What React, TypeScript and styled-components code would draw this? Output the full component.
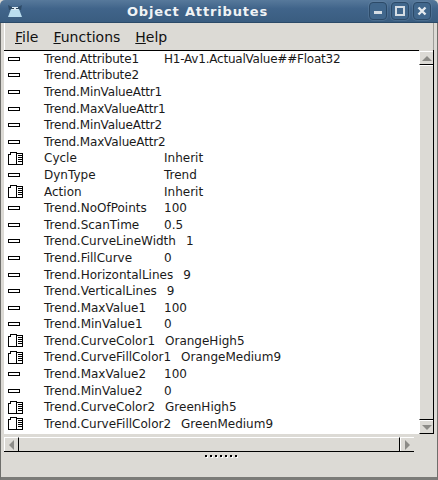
import React from 'react'
import styled, { createGlobalStyle } from 'styled-components'

type Attr = { name: string; value?: string; kind?: 'map' }

const attributes: Attr[] = [
  { name: 'Trend.Attribute1', value: 'H1-Av1.ActualValue##Float32' },
  { name: 'Trend.Attribute2' },
  { name: 'Trend.MinValueAttr1' },
  { name: 'Trend.MaxValueAttr1' },
  { name: 'Trend.MinValueAttr2' },
  { name: 'Trend.MaxValueAttr2' },
  { name: 'Cycle', value: 'Inherit', kind: 'map' },
  { name: 'DynType', value: 'Trend' },
  { name: 'Action', value: 'Inherit', kind: 'map' },
  { name: 'Trend.NoOfPoints', value: '100' },
  { name: 'Trend.ScanTime', value: '0.5' },
  { name: 'Trend.CurveLineWidth', value: '1' },
  { name: 'Trend.FillCurve', value: '0' },
  { name: 'Trend.HorizontalLines', value: '9' },
  { name: 'Trend.VerticalLines', value: '9' },
  { name: 'Trend.MaxValue1', value: '100' },
  { name: 'Trend.MinValue1', value: '0' },
  { name: 'Trend.CurveColor1', value: 'OrangeHigh5', kind: 'map' },
  { name: 'Trend.CurveFillColor1', value: 'OrangeMedium9', kind: 'map' },
  { name: 'Trend.MaxValue2', value: '100' },
  { name: 'Trend.MinValue2', value: '0' },
  { name: 'Trend.CurveColor2', value: 'GreenHigh5', kind: 'map' },
  { name: 'Trend.CurveFillColor2', value: 'GreenMedium9', kind: 'map' },
]

function AttrIcon({ kind }: { kind?: 'map' }) {
  if (kind === 'map') {
    return (
      <svg width="15" height="13" viewBox="0 0 15 13" shapeRendering="crispEdges">
        <path d="M0.5 2.5H2.5V0.5H8.5V12.5H0.5Z" fill="#fff" stroke="#000" />
        <path d="M8.5 1.5H14.5V12.5H8.5Z" fill="#fff" stroke="#000" />
        <path d="M10 3.5H14M10 5.5H14M10 7.5H14M10 9.5H14" stroke="#000" />
      </svg>
    )
  }
  return (
    <svg width="12" height="4" viewBox="0 0 12 4" shapeRendering="crispEdges">
      <rect x="0.5" y="0.5" width="11" height="3" fill="#fff" stroke="#000" />
    </svg>
  )
}

function AppIcon() {
  return (
    <svg width="16" height="15" viewBox="0 0 16 15">
      <path d="M1 1L5 3H11L15 1L14 6H2Z" fill="#2f4c68" />
      <path d="M4 5H12L15 13H1Z" fill="#b9dcee" />
      <path d="M5 3H11V6H5Z" fill="#dbe9f1" />
      <path d="M5 4H7V5H5ZM9 4H11V5H9Z" fill="#33475a" />
    </svg>
  )
}

export default function App() {
  return (
    <>
      <GlobalStyle />
      <Window>
        <TitleBar>
          <TitleIcon>
            <AppIcon />
          </TitleIcon>
          <Title>Object Attributes</Title>
          <WindowButtons>
            <WindowButton>
              <svg width="10" height="10" viewBox="0 0 10 10" shapeRendering="crispEdges">
                <rect x="1" y="5" width="8" height="3" fill="#d5dde4" />
              </svg>
            </WindowButton>
            <WindowButton>
              <svg width="10" height="10" viewBox="0 0 10 10" shapeRendering="crispEdges">
                <rect x="1" y="1" width="8" height="8" fill="none" stroke="#d5dde4" strokeWidth="2" />
              </svg>
            </WindowButton>
            <WindowButton>
              <svg width="10" height="10" viewBox="0 0 10 10">
                <path d="M1.5 1.5L8.5 8.5M8.5 1.5L1.5 8.5" stroke="#e6ebef" strokeWidth="2.4" />
              </svg>
            </WindowButton>
          </WindowButtons>
        </TitleBar>
        <Body>
          <MenuBar>
            <MenuItem><u>F</u>ile</MenuItem>
            <MenuItem><u>F</u>unctions</MenuItem>
            <MenuItem><u>H</u>elp</MenuItem>
          </MenuBar>
          <ListArea>
            <List>
              <Rows>
                {attributes.map((a) => (
                  <Row key={a.name}>
                    <IconCell><AttrIcon kind={a.kind} /></IconCell>
                    <Name $tight={a.name.includes('Attr')}>{a.name}</Name>
                    {a.value && <Value $tight={a.value.includes('##')}>{a.value}</Value>}
                  </Row>
                ))}
              </Rows>
            </List>
            <VScroll>
              <ScrollButton><Arrow dir="up" /></ScrollButton>
              <VThumb />
              <ScrollButton><Arrow dir="down" /></ScrollButton>
            </VScroll>
          </ListArea>
          <HScroll>
            <ScrollButton $side="left"><Arrow dir="left" /></ScrollButton>
            <HThumb />
            <ScrollButton $side="right"><Arrow dir="right" /></ScrollButton>
          </HScroll>
          <Status>
            <Grip>
              {Array.from({ length: 7 }, (_, i) => <GripDot key={i} />)}
            </Grip>
          </Status>
        </Body>
      </Window>
    </>
  )
}

const GlobalStyle = createGlobalStyle`
  html, body {
    margin: 0;
    padding: 0;
    background: #dcdad5;
  }
`

const Window = styled.div`
  width: 438px;
  height: 480px;
  display: flex;
  flex-direction: column;
  font-family: "DejaVu Sans", sans-serif;
  overflow: hidden;
`

const TitleBar = styled.div`
  height: 23px;
  flex: none;
  display: flex;
  align-items: center;
  position: relative;
  box-sizing: border-box;
  background: linear-gradient(#57799b, #40648a 40%, #3a5d80);
  border-radius: 5px 5px 0 0;
  border-bottom: 1px solid #2b4a68;
`

const TitleIcon = styled.div`
  width: 16px;
  height: 15px;
  margin-left: 7px;
  display: flex;
`

const Title = styled.div`
  position: absolute;
  left: 0;
  right: 43px;
  text-align: center;
  color: #f0f3f5;
  font-size: 13px;
  font-weight: bold;
  letter-spacing: 0.85px;
`

const WindowButtons = styled.div`
  margin-left: auto;
  margin-right: 7px;
  display: flex;
  gap: 4px;
`

const WindowButton = styled.div`
  width: 18px;
  height: 18px;
  box-sizing: border-box;
  display: flex;
  align-items: center;
  justify-content: center;
  border: 1px solid #2c4a68;
  border-radius: 4px;
  background: #41678c;
  box-shadow: 0 0 0 1px rgba(120, 150, 180, 0.25);
`

const Body = styled.div`
  flex: 1;
  display: flex;
  flex-direction: column;
  min-height: 0;
  border-left: 1px solid #6e6e6b;
  border-right: 1px solid #6e6e6b;
  border-bottom: 3px solid #7b7b78;
  padding: 0 3px;
  background: #dcdad5;
`

const MenuBar = styled.div`
  height: 27px;
  flex: none;
  display: flex;
  align-items: center;
  padding-left: 10px;
  gap: 15px;
  box-sizing: border-box;
  border-left: 1px solid #fff;
  border-right: 1px solid #9d9c98;
  font-size: 14px;
  color: #111;
`

const MenuItem = styled.span``

const ListArea = styled.div`
  flex: none;
  height: 384px;
  display: flex;
`

const List = styled.div`
  flex: 1;
  background: #fff;
  border-top: 1px solid #000;
  font-size: 12px;
  color: #1a1a1a;
  overflow: hidden;
`

const Rows = styled.div`
  margin-top: -0.5px;
`

const Row = styled.div`
  height: 16.6px;
  display: flex;
  align-items: center;
  white-space: nowrap;
`

const IconCell = styled.div`
  width: 40px;
  flex: none;
  padding-left: 4px;
  box-sizing: border-box;
  display: flex;
  align-items: center;
`

const Name = styled.span<{ $tight?: boolean }>`
  min-width: 120px;
  padding-right: 10px;
  box-sizing: border-box;
  flex: none;
  letter-spacing: ${(p) => (p.$tight ? '-0.15px' : '0')};
`

const Value = styled.span<{ $tight?: boolean }>`
  letter-spacing: ${(p) => (p.$tight ? '-0.22px' : '0')};
`

const VScroll = styled.div`
  width: 15px;
  flex: none;
  display: flex;
  flex-direction: column;
  box-sizing: border-box;
  padding-top: 1px;
  border-right: 1px solid #000;
`

const ScrollButton = styled.div<{ $side?: 'left' | 'right' }>`
  width: 14px;
  height: 14px;
  flex: none;
  display: flex;
  align-items: center;
  justify-content: center;
  background: #dcdad5;
  border-top: 1px solid #fff;
  border-left: 1px solid #fff;
  box-sizing: border-box;
  ${(p) => (p.$side ? '' : 'border-bottom: 1px solid #000;')}
`

const VThumb = styled.div`
  flex: 1;
  background: #dcdad5;
  border-top: 1px solid #fff;
  border-left: 1px solid #fff;
  border-bottom: 1px solid #000;
`

const HScroll = styled.div`
  width: 410px;
  height: 15px;
  flex: none;
  display: flex;
  margin-top: 3px;
  border-bottom: 1px solid #000;
  box-sizing: border-box;
`

const HThumb = styled.div`
  flex: 1;
  background: #dcdad5;
  border-top: 1px solid #fff;
  border-left: 1px solid #000;
  border-right: 1px solid #000;
`

const Arrow = styled.i<{ dir: 'up' | 'down' | 'left' | 'right' }>`
  width: 0;
  height: 0;
  display: block;
  border-style: solid;
  border-color: transparent;
  ${(p) => (p.dir === 'up' ? 'border-width: 0 5px 5px; border-bottom-color: #8c8b87;' : '')}
  ${(p) => (p.dir === 'down' ? 'border-width: 5px 5px 0; border-top-color: #8c8b87;' : '')}
  ${(p) => (p.dir === 'left' ? 'border-width: 5px 5px 5px 0; border-right-color: #8c8b87;' : '')}
  ${(p) => (p.dir === 'right' ? 'border-width: 5px 0 5px 5px; border-left-color: #8c8b87;' : '')}
`

const Status = styled.div`
  flex: 1;
  display: flex;
  justify-content: center;
  padding-top: 3px;
`

const Grip = styled.div`
  display: flex;
  gap: 3px;
  height: 2px;
  padding-left: 3px;
`

const GripDot = styled.span`
  width: 2px;
  height: 2px;
  background: #000;
  box-shadow: 1px 1px 0 #fff;
`
